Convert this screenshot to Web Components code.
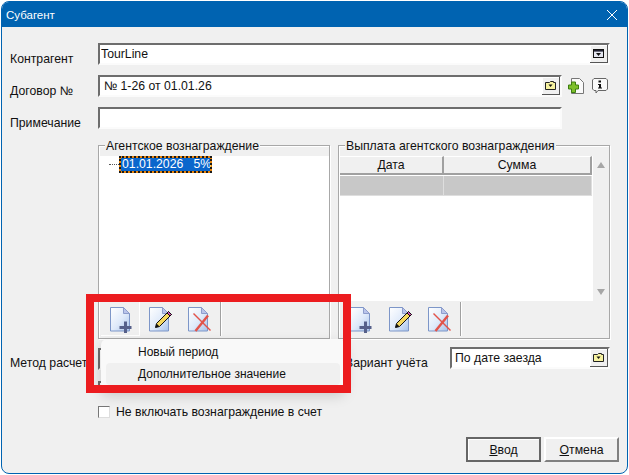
<!doctype html>
<html>
<head>
<meta charset="utf-8">
<style>
  html, body { margin: 0; height: 100%; background: #fff; }
  body { padding: 1px 0 0 1px; box-sizing: border-box; font: 12.25px "Liberation Sans", Arial, sans-serif; color: #111; }
</style>
</head>
<body>
<template id="doc-icon">
  <svg width="26" height="28" viewBox="0 0 26 28">
    <defs>
      <linearGradient id="page" x1="0" y1="0" x2="1" y2="1">
        <stop offset="0" stop-color="#fff"/><stop offset=".55" stop-color="#dfeafa"/><stop offset="1" stop-color="#a9c3ea"/>
      </linearGradient>
    </defs>
    <path d="M1.5 1.5H14.5L20.5 7.5V25H1.5Z" fill="url(#page)" stroke="#7d96c8"/>
    <path d="M14.5 1.5V7.5H20.5Z" fill="#b9c4ea" stroke="#8d9dcc"/>
    <g class="mark"></g>
  </svg>
</template>

<script>
class FieldBox extends HTMLElement {
  connectedCallback() {
    const button = this.getAttribute('button');
    const glyph = button === 'folder'
      ? `<svg width="11" height="9" viewBox="0 0 11 9"><path d="M.5 1.5H4.5L5.5 .5H8.5V1.5H10.5V8.5H.5Z" fill="#f6f2a0" stroke="#222"/><path d="M3.5 3.5H7.5L5.5 6Z" fill="#111"/></svg>`
      : `<svg width="11" height="9" viewBox="0 0 11 9"><rect x=".5" y=".5" width="10" height="8" fill="#e4e6f0" stroke="#111"/><rect x="1" y="1" width="9" height="1.6" fill="#223"/><path d="M3 4H8L5.5 7Z" fill="#111"/></svg>`;
    this.attachShadow({ mode: 'open' }).innerHTML = `
      <style>
        :host {
          display: flex;
          box-sizing: border-box;
          height: 22px;
          background: #fff;
          border: 2px solid #fff;
          border-top-color: #6d6d6d;
          border-left-color: #6d6d6d;
          border-right-color: #fbfbfb;
          border-bottom-color: #fbfbfb;
          padding-left: 1px;
        }
        .text { flex: 1; line-height: 18px; white-space: nowrap; overflow: hidden; }
        .btn {
          width: 18px;
          display: ${button ? 'flex' : 'none'};
          align-items: center;
          justify-content: center;
          background: #f0f0f0;
          border-right: 1px solid #555;
          border-bottom: 1px solid #555;
          box-shadow: inset 1px 1px 0 #fff;
          box-sizing: border-box;
        }
      </style>
      <div class="text"><slot></slot></div>
      <div class="btn">${glyph}</div>
    `;
  }
}

class FormRow extends HTMLElement {
  connectedCallback() {
    this.attachShadow({ mode: 'open' }).innerHTML = `
      <style>
        :host { display: grid; grid-template-columns: 88px 1fr; align-items: center; }
        :host([top]) { align-items: start; }
        .label { padding-top: 9px; margin-bottom: -1px; white-space: nowrap; }
      </style>
      <div class="label"><slot name="label"></slot></div>
      <slot></slot>
    `;
  }
}

class GroupBox extends HTMLElement {
  connectedCallback() {
    this.attachShadow({ mode: 'open' }).innerHTML = `
      <style>
        :host {
          display: flex;
          flex-direction: column;
          position: relative;
          box-sizing: border-box;
          height: 194px;
          border: 1px solid #a8a8a8;
          box-shadow: 1px 1px 0 #fff, inset 1px 1px 0 #fff;
          padding: 10px 0 0 1px;
        }
        .title {
          position: absolute;
          top: -6px;
          left: 6px;
          background: #f0f0f0;
          padding: 0 1px;
          line-height: 13px;
          white-space: nowrap;
        }
        .body { height: 145px; overflow: hidden; background: #fff; }
        .tools { flex: 1; }
      </style>
      <div class="title">${this.getAttribute('title')}</div>
      <div class="body"><slot></slot></div>
      <div class="tools"><slot name="tools"></slot></div>
    `;
  }
}

class DocTool extends HTMLElement {
  connectedCallback() {
    const kind = this.getAttribute('kind');
    const marks = {
      add: `<path d="M16.5 15.5V27M10.5 21.5H22.5" stroke="#56608a" stroke-width="3"/>`,
      edit: `<path d="M7.5 21.5L8.5 17.5L20.5 5.5L23.5 8.5L11.5 20.5Z" fill="#f5d75e" stroke="#111"/><path d="M20.5 5.5L23.5 8.5L22 10L19 7Z" fill="#d24fb0" stroke="#111"/><path d="M7.5 21.5L8.5 17.5L11.5 20.5Z" fill="#111"/>`,
      del: `<path d="M6.5 7.5L23.5 24.5" stroke="#e2534a" stroke-width="1.4"/><path d="M21 9.5L8.5 25" stroke="#e2534a" stroke-width="2.4"/>`,
    };
    const icon = document.getElementById('doc-icon').content.cloneNode(true);
    icon.querySelector('.mark').innerHTML = marks[kind];
    const root = this.attachShadow({ mode: 'open' });
    root.innerHTML = `
      <style>
        :host { display: block; width: 39px; height: 35px; padding: 5px 0 0 8px; box-sizing: border-box; }
        :host([raised]) { border-right: 1px solid #fff; border-bottom: 1px solid #fff; }
        svg { display: block; overflow: visible; }
      </style>
    `;
    root.append(icon);
  }
}

class ToolStrip extends HTMLElement {
  connectedCallback() {
    this.attachShadow({ mode: 'open' }).innerHTML = `
      <style>
        :host { display: flex; height: 35px; padding-left: 1px; box-sizing: border-box; }
        .sep { width: 1px; height: 34px; margin: 1px 0 0 2px; background: #a0a0a0; box-shadow: 1px 0 0 #fff; }
      </style>
      <slot></slot>
      <div class="sep"></div>
    `;
  }
}

class TreeList extends HTMLElement {
  connectedCallback() {
    this.attachShadow({ mode: 'open' }).innerHTML = `
      <style>
        :host { display: flex; align-items: center; padding-left: 9px; }
        .dots { width: 10px; border-top: 1px dotted #555; }
        .sel {
          box-sizing: border-box;
          width: 93px;
          height: 17px;
          background: #0a66cc;
          color: #fff;
          outline: 2px dotted #1a1a1a;
          outline-offset: -2px;
          box-shadow: inset 0 0 0 2px #e8850c;
          line-height: 17px;
          padding-left: 3px;
          white-space: pre;
        }
      </style>
      <div class="dots"></div>
      <div class="sel"><slot></slot></div>
    `;
  }
}

class PayGrid extends HTMLElement {
  connectedCallback() {
    this.attachShadow({ mode: 'open' }).innerHTML = `
      <style>
        :host { display: grid; grid-template-columns: 253px 16px; height: 100%; background: #fff; }
        .table { display: grid; grid-template-columns: 104px 148px; grid-auto-rows: min-content; }
        .head {
          height: 19px; line-height: 16px; text-align: center; background: #f0f0f0;
          border-right: 2px solid #a0a0a0; border-bottom: 2px solid #a0a0a0;
          border-top: 1px solid #fff; box-sizing: border-box; margin-bottom: 1px;
        }
        .cell { height: 20px; background: #c8c8c8; border-right: 1px solid #dedede; border-bottom: 1px solid #dedede; box-sizing: border-box; }
        .bar {
          background: #f0f0f0; display: flex; flex-direction: column; justify-content: space-between;
          align-items: center; padding: 6px 0;
        }
        .up, .down { width: 0; height: 0; border-left: 4px solid transparent; border-right: 4px solid transparent; }
        .up { border-bottom: 6px solid #a6a6a6; }
        .down { border-top: 6px solid #a6a6a6; }
      </style>
      <div class="table">
        <div class="head">Дата</div><div class="head">Сумма</div>
        <div class="cell"></div><div class="cell"></div>
      </div>
      <div class="bar"><div class="up"></div><div class="down"></div></div>
    `;
  }
}

class DialogButton extends HTMLElement {
  connectedCallback() {
    this.attachShadow({ mode: 'open' }).innerHTML = `
      <style>
        :host {
          display: flex; align-items: center; justify-content: center;
          width: 75px; height: 25px; box-sizing: border-box;
          background: #f0f0f0;
          border: 2px solid #fff;
          border-right-color: #808080;
          border-bottom-color: #808080;
        }
        :host([default]) { border-color: #666; box-shadow: inset 1px 1px 0 #fff; }
        u { text-decoration: underline; }
      </style>
      <div><u>${this.getAttribute('key')}</u><slot></slot></div>
    `;
  }
}

class PopupMenu extends HTMLElement {
  connectedCallback() {
    this.attachShadow({ mode: 'open' }).innerHTML = `
      <style>
        :host {
          position: absolute;
          left: 99px;
          top: 337px;
          width: 244px;
          height: 50px;
          box-sizing: border-box;
          background: #f9f9f9;
          border-radius: 6px;
          padding: 2px 5px;
          box-shadow: 0 6px 14px rgba(0,0,0,.18);
        }
        ::slotted(div) {
          height: 22px;
          line-height: 22px;
          padding-left: 32px;
          border-radius: 4px;
          font-size: 12px;
        }
        ::slotted(.hot) { background: #f0f0f0; }
      </style>
      <slot></slot>
    `;
  }
}

class AppDialog extends HTMLElement {
  connectedCallback() {
    this.attachShadow({ mode: 'open' }).innerHTML = `
      <style>
        :host {
          display: flex;
          flex-direction: column;
          position: relative;
          box-sizing: border-box;
          width: 627px;
          height: 473px;
          background: #f0f0f0;
          border: 1px solid #0063b1;
          border-radius: 8px;
          overflow: hidden;
        }
        .title {
          display: flex;
          justify-content: space-between;
          align-items: center;
          height: 25px;
          background: #0063b1;
          color: #fff;
          padding: 0 4px;
          flex: none;
          font-size: 11.5px;
        }
        .content { flex: 1; padding: 16px 8px 0 8px; }
        svg { display: block; margin-right: 5px; }
      </style>
      <div class="title">
        <span>${this.getAttribute('title')}</span>
        <svg width="12" height="12" viewBox="0 0 12 12"><path d="M1 1L11 11M11 1L1 11" stroke="#fff" fill="none"/></svg>
      </div>
      <div class="content"><slot></slot></div>
    `;
  }
}

class RedFrame extends HTMLElement {
  connectedCallback() {
    this.attachShadow({ mode: 'open' }).innerHTML = `
      <style>
        :host {
          position: absolute; left: 84px; top: 292px; width: 265px; height: 99px;
          box-sizing: border-box; border: 8px solid #ec1c1f;
        }
      </style>
    `;
  }
}

customElements.define('field-box', FieldBox);
customElements.define('form-row', FormRow);
customElements.define('group-box', GroupBox);
customElements.define('doc-tool', DocTool);
customElements.define('tool-strip', ToolStrip);
customElements.define('tree-list', TreeList);
customElements.define('pay-grid', PayGrid);
customElements.define('dialog-button', DialogButton);
customElements.define('popup-menu', PopupMenu);
customElements.define('app-dialog', AppDialog);
customElements.define('red-frame', RedFrame);
</script>

<app-dialog title="Субагент">
  <div style="display:flex;flex-direction:column;gap:10px">
    <form-row style="margin-right:9px">
      <span slot="label">Контрагент</span>
      <field-box button="combo">TourLine</field-box>
    </form-row>
    <form-row>
      <span slot="label">Договор №</span>
      <div style="display:flex;align-items:center">
        <field-box button="folder" style="width:464px;padding-left:4px">№ 1-26 от 01.01.26</field-box>
        <svg width="16" height="16" viewBox="0 0 16 16" style="margin-left:6px"><path d="M3.5 .5H11.5L15.5 4.5V15.5H3.5Z" fill="#fafafa" stroke="#777"/><path d="M3.5 4H7.5V7H10.5V11H7.5V14.5H3.5V11H.5V7H3.5Z" fill="#7ec02c" stroke="#3d7d10"/></svg>
        <svg width="16" height="16" viewBox="0 0 16 16" style="margin-left:8px"><path d="M2 .5H14L15.5 2V11L14 12.5H6L4 15V12.5H2L.5 11V2Z" fill="#fafafa" stroke="#666"/><path d="M6.5 2.5H9V4.5H6.5ZM6 6H9V9.5H10V10.5H6V9.5H7V7H6Z" fill="#111"/></svg>
      </div>
    </form-row>
    <form-row>
      <span slot="label">Примечание</span>
      <field-box style="width:464px"></field-box>
    </form-row>
    <div style="display:grid;grid-template-columns:232px 272px;gap:8px;margin:6px 0 0 88px">
      <group-box title="Агентское вознаграждение">
        <tree-list>01.01.2026   5%</tree-list>
        <tool-strip slot="tools">
          <doc-tool kind="add" raised></doc-tool>
          <doc-tool kind="edit"></doc-tool>
          <doc-tool kind="del"></doc-tool>
        </tool-strip>
      </group-box>
      <group-box title="Выплата агентского вознаграждения">
        <pay-grid></pay-grid>
        <tool-strip slot="tools">
          <doc-tool kind="add"></doc-tool>
          <doc-tool kind="edit"></doc-tool>
          <doc-tool kind="del"></doc-tool>
        </tool-strip>
      </group-box>
    </div>
    <div style="display:grid;grid-template-columns:335px 105px 160px;align-items:start;margin-top:-2px">
      <form-row top>
        <span slot="label">Метод расчет</span>
        <div style="display:flex;flex-direction:column;gap:11px;padding:1px 40px 0 0">
          <field-box></field-box>
          <field-box style="height:12px"></field-box>
        </div>
      </form-row>
      <div style="padding-top:9px;white-space:nowrap">Вариант учёта</div>
      <field-box button="folder" style="padding-left:3px">По дате заезда</field-box>
    </div>
    <div style="display:flex;align-items:center;gap:6px;margin:2px 0 0 88px">
      <div style="width:12px;height:12px;box-sizing:border-box;background:#fff;border:1px solid #777;border-right-color:#ddd;border-bottom-color:#ddd"></div>
      <span>Не включать вознаграждение в счет</span>
    </div>
    <div style="display:flex;justify-content:flex-end;gap:3px;margin-top:8px">
      <dialog-button key="В" default>вод</dialog-button>
      <dialog-button key="О">тмена</dialog-button>
    </div>
  </div>
  <popup-menu>
    <div>Новый период</div>
    <div class="hot">Дополнительное значение</div>
  </popup-menu>
  <red-frame></red-frame>
</app-dialog>
</body>
</html>
